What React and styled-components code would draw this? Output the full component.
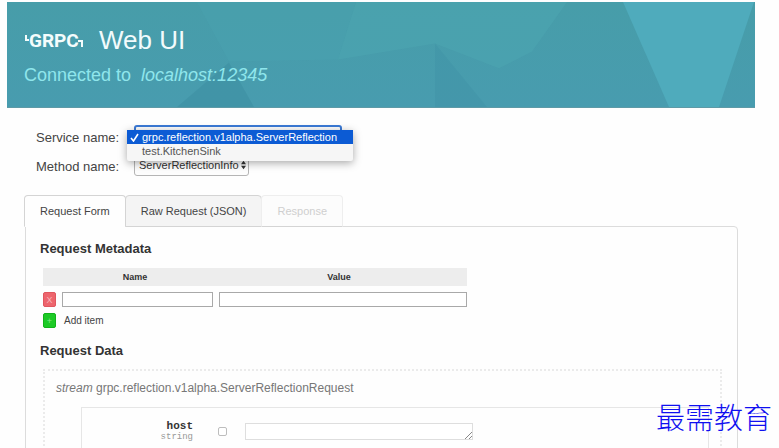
import React from "react";
import styled, { createGlobalStyle } from "styled-components";

const GlobalStyle = createGlobalStyle`
  * { box-sizing: border-box; }
  body {
    margin: 0;
    background: #fefefe;
    color: #333;
    font-family: "Liberation Sans", Arial, sans-serif;
  }
`;

const Page = styled.div`
  position: relative;
  height: 100vh;
  overflow: hidden;
  padding: 2px 24px 0 7px;
`;

const Header = styled.header`
  position: relative;
  overflow: hidden;
  padding: 22px 17px 20px;
  background: #489dac;
  border-bottom: 1px solid #5e9aa6;
`;

const Facets = styled.svg`
  position: absolute;
  inset: 0;
  width: 100%;
  height: 100%;
`;

const Brand = styled.h1`
  position: relative;
  display: flex;
  align-items: center;
  gap: 15px;
  margin: 0;
  color: #f2fbfc;
  font-size: 26px;
  font-weight: 400;
  line-height: 32px;
`;

const Logo = styled.svg`
  width: 60px;
  height: 28px;
`;

const LogoText = styled.text`
  font-family: Roboto, "Liberation Sans", sans-serif;
  font-size: 19px;
  font-weight: 700;
`;

const Connection = styled.p`
  position: relative;
  display: flex;
  gap: 10px;
  margin: 8px 0 0;
  color: #8fe6ec;
  font-size: 18px;
  line-height: 23px;
`;

const Content = styled.main`
  padding: 15px 17px 0 18px;
`;

const Selectors = styled.div`
  display: grid;
  grid-template-columns: 84px 1fr;
  column-gap: 18px;
  row-gap: 4px;
  padding-left: 11px;
`;

const Label = styled.label`
  color: #444;
  font-size: 13px;
  line-height: 21px;
  padding-top: 4px;
  white-space: nowrap;
`;

const Field = styled.div`
  position: relative;
  margin-left: -4px;
`;

const Select = styled.select`
  display: block;
  appearance: none;
  width: ${(p) => p.$width}px;
  height: 22px;
  margin-top: 2px;
  padding: 0 4px;
  color: #333;
  background: #fdfdfd;
  border: ${(p) => (p.$open ? "2px solid #3b7ad6" : "1px solid #b5b5b5")};
  border-radius: 3px;
  font-family: inherit;
  font-size: 11px;
`;

const Arrows = styled.svg`
  position: absolute;
  left: 107px;
  top: 8px;
  width: 5px;
  height: 10px;
`;

const Menu = styled.ul`
  position: absolute;
  z-index: 2;
  top: 7px;
  left: -7px;
  width: 226px;
  margin: 0;
  padding: 0 0 3px;
  list-style: none;
  background: #f6f6f6;
  border-radius: 2px;
  box-shadow: 0 2px 8px rgba(0, 0, 0, 0.35);
`;

const MenuItem = styled.li`
  display: flex;
  align-items: center;
  gap: 3px;
  padding-left: 3px;
  height: 14px;
  color: ${(p) => (p.$selected ? "#fff" : "#555")};
  background: ${(p) => (p.$selected ? "#0c5bd4" : "transparent")};
  font-size: 11px;
  white-space: nowrap;
`;

const Check = styled.svg`
  width: 9px;
  height: 9px;
`;

const Tabs = styled.div`
  display: flex;
  margin: 18px 0 -1px -1px;
`;

const Tab = styled.button`
  position: relative;
  height: 32px;
  padding: 0 15px;
  margin-right: -1px;
  border: 1px solid ${(p) => (p.disabled ? "#eeeeee" : "#d4d4d4")};
  border-bottom-color: ${(p) => (p.$active ? "#fefefe" : "#d4d4d4")};
  border-radius: 4px 4px 0 0;
  background: ${(p) => (p.$active ? "#fefefe" : p.disabled ? "#fcfcfc" : "#f4f4f4")};
  color: ${(p) => (p.disabled ? "#cfcfcf" : "#444")};
  font-family: inherit;
  font-size: 11px;
`;

const Panel = styled.section`
  min-height: 300px;
  padding: 13px 15px 13px 14px;
  border: 1px solid #dcdcdc;
  border-radius: 0 4px 0 0;
`;

const Heading = styled.h2`
  margin: 0;
  font-size: 13px;
  line-height: 17px;
`;

const MetaTable = styled.table`
  width: 424px;
  max-width: 100%;
  margin: 11px 0 14px;
  border-spacing: 0;
  table-layout: fixed;
`;

const ActionCol = styled.col`
  width: 19px;
`;

const NameCol = styled.col`
  width: 157px;
`;

const HeadCell = styled.th`
  height: 18px;
  padding: ${(p) => p.$pad};
  background: #ededed;
  font-size: 9px;
`;

const Cell = styled.td`
  height: 21px;
  padding: ${(p) => p.$pad || "0"};
  color: #444;
  font-size: 10px;
  line-height: 15px;
  vertical-align: bottom;
`;

const MetaInput = styled.input`
  display: block;
  width: 100%;
  height: 15px;
  padding: 0 3px;
  border: 1px solid #a9a9a9;
  background: #fff;
  font-size: 10px;
`;

const SquareButton = styled.button`
  display: block;
  width: 13px;
  height: 15px;
  padding: 0;
  border: 1px solid ${(p) => (p.$add ? "#12b31a" : "#e0565f")};
  border-radius: 2px;
  background: ${(p) => (p.$add ? "#1dca26" : "#ed656d")};
  color: ${(p) => (p.$add ? "#86e88a" : "#f8b4b8")};
  font-family: inherit;
  font-size: 9px;
  line-height: 12px;
`;

const TableWrap = styled.div`
  padding-left: 3px;
`;

const Message = styled.div`
  min-height: 120px;
  margin: 10px 0 0 3px;
  padding: 10px 11px 0;
  border: 2px dotted #ebebeb;
`;

const TypeName = styled.div`
  color: #777;
  font-size: 12px;
  line-height: 15px;
`;

const Fields = styled.div`
  display: flex;
  align-items: flex-start;
  min-height: 80px;
  margin: 11px 0 0 25px;
  padding: 12px 0 0;
  border: 1px solid #e6e6e6;
`;

const FieldName = styled.label`
  width: 111px;
  color: #333;
  font-family: "Liberation Mono", monospace;
  font-size: 11px;
  font-weight: 700;
  line-height: 12px;
  text-align: right;
`;

const FieldType = styled.span`
  display: block;
  color: #999;
  font-size: 9px;
  font-weight: 400;
  line-height: 11px;
`;

const Tick = styled.input`
  appearance: none;
  width: 9px;
  height: 9px;
  margin: 7px 18px 0 25px;
  border: 1px solid #bdbdbd;
  border-radius: 2px;
  background: #fff;
`;

const TextBox = styled.textarea`
  display: block;
  width: 228px;
  height: 17px;
  margin-top: 3px;
  padding: 0 3px;
  border: 1px solid #dedede;
  background: #fff;
  font-size: 10px;
  resize: none;
`;

const BoxWrap = styled.div`
  position: relative;
`;

const Grip = styled.svg`
  position: absolute;
  right: 1px;
  top: 12px;
  width: 7px;
  height: 7px;
`;

const Mark = styled.div`
  position: absolute;
  z-index: 3;
  right: 7px;
  bottom: 14px;
  color: #1010f0;
  font-family: "Noto Sans CJK SC", sans-serif;
  font-size: 29px;
  font-weight: 300;
  line-height: 36px;
`;

const services = ["grpc.reflection.v1alpha.ServerReflection", "test.KitchenSink"];

export default function App() {
  return (
    <>
      <GlobalStyle />
      <Page>
        <Header>
          <Facets viewBox="0 0 748 106" preserveAspectRatio="none" aria-hidden="true">
            <defs>
              <linearGradient id="shade" x2="0" y2="1">
                <stop offset="0" stopColor="#479da9" />
                <stop offset="1" stopColor="#489caf" />
              </linearGradient>
            </defs>
            <path d="M0 0H748V106H0Z" fill="url(#shade)" />
            <path d="M190 0H349L331 58L222 60Z" fill="#4ba5b2" opacity=".3" />
            <path d="M349 0H560L525 50L492 67L428 42L331 58Z" fill="#4ca5b0" opacity=".6" />
            <path d="M428 42L480 106H428Z" fill="#3f92a6" opacity=".4" />
            <path d="M170 106L222 61L247 106Z" fill="#3e8fa2" opacity=".6" />
            <path d="M616 0H747L712 106H662Z" fill="#4fabbc" />
          </Facets>
          <Brand>
            <Logo viewBox="0 0 60 28" role="img" aria-label="GRPC">
              <LogoText x="5" y="21" fill="#f4fcfc">GRPC</LogoText>
              <path d="M2 9v5h3M54 15h4v6" fill="none" stroke="#f4fcfc" strokeWidth="2" />
            </Logo>
            <span>Web UI</span>
          </Brand>
          <Connection>
            <span>Connected to</span>
            <em>localhost:12345</em>
          </Connection>
        </Header>
        <Content>
          <Selectors>
            <Label htmlFor="service">Service name:</Label>
            <Field>
              <Select id="service" $open $width={208} defaultValue={services[0]}>
                {services.map((s) => (
                  <option key={s}>{s}</option>
                ))}
              </Select>
              <Menu role="listbox" aria-label="Service name">
                {services.map((s, i) => (
                  <MenuItem key={s} role="option" aria-selected={i === 0} $selected={i === 0}>
                    <Check viewBox="0 0 9 9" aria-hidden="true">
                      {i === 0 && <path d="M1 5l2.5 3L8 1" fill="none" stroke="#fff" strokeWidth="1.6" />}
                    </Check>
                    {s}
                  </MenuItem>
                ))}
              </Menu>
            </Field>
            <Label htmlFor="method">Method name:</Label>
            <Field>
              <Select id="method" $width={115}>
                <option>ServerReflectionInfo</option>
              </Select>
              <Arrows viewBox="0 0 6 10" aria-hidden="true">
                <path d="M0 4L3 0L6 4ZM0 6L3 10L6 6Z" fill="#333" />
              </Arrows>
            </Field>
          </Selectors>
          <Tabs role="tablist">
            <Tab role="tab" aria-selected="true" $active>Request Form</Tab>
            <Tab role="tab" aria-selected="false">Raw Request (JSON)</Tab>
            <Tab role="tab" aria-selected="false" disabled>Response</Tab>
          </Tabs>
          <Panel role="tabpanel">
            <Heading>Request Metadata</Heading>
            <TableWrap>
              <MetaTable>
                <colgroup>
                  <ActionCol />
                  <NameCol />
                  <col />
                </colgroup>
                <thead>
                  <tr>
                    <HeadCell colSpan={2} $pad="0 0 0 8px">Name</HeadCell>
                    <HeadCell $pad="0 8px 0 0">Value</HeadCell>
                  </tr>
                </thead>
                <tbody>
                  <tr>
                    <Cell><SquareButton aria-label="Remove item">X</SquareButton></Cell>
                    <Cell $pad="0 6px 0 0"><MetaInput aria-label="Name" /></Cell>
                    <Cell><MetaInput aria-label="Value" /></Cell>
                  </tr>
                  <tr>
                    <Cell><SquareButton id="add" $add>+</SquareButton></Cell>
                    <Cell $pad="0 0 0 2px" colSpan={2}>
                      <label htmlFor="add">Add item</label>
                    </Cell>
                  </tr>
                </tbody>
              </MetaTable>
            </TableWrap>
            <Heading>Request Data</Heading>
            <Message>
              <TypeName><em>stream</em> grpc.reflection.v1alpha.ServerReflectionRequest</TypeName>
              <Fields>
                <FieldName htmlFor="host">
                  host
                  <FieldType>string</FieldType>
                </FieldName>
                <Tick type="checkbox" aria-label="Set host" />
                <BoxWrap>
                  <TextBox id="host" rows={1} />
                  <Grip viewBox="0 0 7 7" aria-hidden="true">
                    <path d="M0 7L7 0M4 7L7 4" stroke="#888" strokeWidth="1" />
                  </Grip>
                </BoxWrap>
              </Fields>
            </Message>
          </Panel>
        </Content>
        <Mark lang="zh-CN">最需教育</Mark>
      </Page>
    </>
  );
}
